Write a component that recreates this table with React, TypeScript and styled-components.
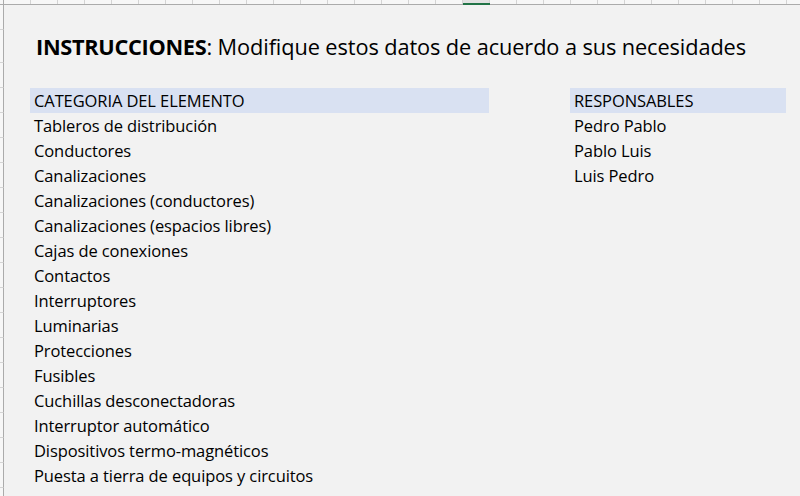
import * as React from "react";
import styled, { createGlobalStyle } from "styled-components";

const GlobalStyle = createGlobalStyle`
  html, body {
    margin: 0;
    padding: 0;
    background: #f2f2f2;
  }
  body {
    font-family: "Open Sans", "Lato", sans-serif;
    color: #000;
    overflow: hidden;
  }
`;

const Sheet = styled.div`
  width: 800px;
  height: 496px;
  overflow: hidden;
  background: #f2f2f2;
`;

const HeaderRow = styled.div`
  display: flex;
  height: 4px;
  border-bottom: 1px solid #ababab;
  background: #f7f7f7;
`;

const Corner = styled.div`
  width: 3px;
  flex: none;
  border-right: 1px solid #ababab;
`;

const ColHead = styled.div<{ $selected?: boolean }>`
  width: 26px;
  flex: none;
  border-right: 1px solid #d4d4d4;
  box-sizing: content-box;
  position: relative;
  ${(p) =>
    p.$selected &&
    `
    background: #e1e1e1;
    &::after {
      content: "";
      position: absolute;
      left: 0;
      right: -1px;
      bottom: -1px;
      height: 2px;
      background: #217346;
    }
  `}
`;

const Row = styled.div<{ $h: number }>`
  display: flex;
  height: ${(p) => p.$h}px;
`;

const RowHead = styled.div`
  width: 3px;
  flex: none;
  background: #f7f7f7;
  border-right: 1px solid #ababab;
  border-bottom: 1px solid #d4d4d4;
  box-sizing: content-box;
  height: calc(100% - 1px);
`;

const Cells = styled.div`
  display: flex;
  align-items: flex-end;
  padding-left: 26px;
  gap: 81px;
  flex: 1;
`;

const Cell = styled.div<{ $w: number; $head?: boolean }>`
  width: ${(p) => p.$w}px;
  height: 25px;
  box-sizing: border-box;
  padding: 0 4px;
  font-size: 16.5px;
  line-height: 26px;
  letter-spacing: -0.1px;
  white-space: nowrap;
  background: ${(p) => (p.$head ? "#d9e1f2" : "transparent")};
`;

const Title = styled.div`
  padding-left: 6px;
  padding-bottom: 2px;
  font-size: 21.75px;
  letter-spacing: -0.1px;
  white-space: nowrap;
  b {
    font-weight: 700;
    letter-spacing: -0.3px;
  }
`;

const categories = [
  "Tableros de distribución",
  "Conductores",
  "Canalizaciones",
  "Canalizaciones (conductores)",
  "Canalizaciones (espacios libres)",
  "Cajas de conexiones",
  "Contactos",
  "Interruptores",
  "Luminarias",
  "Protecciones",
  "Fusibles",
  "Cuchillas desconectadoras",
  "Interruptor automático",
  "Dispositivos termo-magnéticos",
  "Puesta a tierra de equipos y circuitos",
];

const responsables = ["Pedro Pablo", "Pablo Luis", "Luis Pedro"];

export default function App() {
  const cols = Array.from({ length: 30 }, (_, i) => i);
  return (
    <Sheet>
      <GlobalStyle />
      <HeaderRow>
        <Corner />
        {cols.map((c) => (
          <ColHead key={c} $selected={c === 17} />
        ))}
      </HeaderRow>
      <Row $h={25}>
        <RowHead />
      </Row>
      <Row $h={33}>
        <RowHead />
        <Cells>
          <Title>
            <b>INSTRUCCIONES</b>: Modifique estos datos de acuerdo a sus necesidades
          </Title>
        </Cells>
      </Row>
      <Row $h={25}>
        <RowHead />
      </Row>
      <Row $h={25}>
        <RowHead />
        <Cells>
          <Cell $w={459} $head>CATEGORIA DEL ELEMENTO</Cell>
          <Cell $w={216} $head>RESPONSABLES</Cell>
        </Cells>
      </Row>
      {categories.map((cat, i) => (
        <Row $h={25} key={cat}>
          <RowHead />
          <Cells>
            <Cell $w={459}>{cat}</Cell>
            <Cell $w={216}>{responsables[i] ?? ""}</Cell>
          </Cells>
        </Row>
      ))}
      <Row $h={25}>
        <RowHead />
      </Row>
    </Sheet>
  );
}
